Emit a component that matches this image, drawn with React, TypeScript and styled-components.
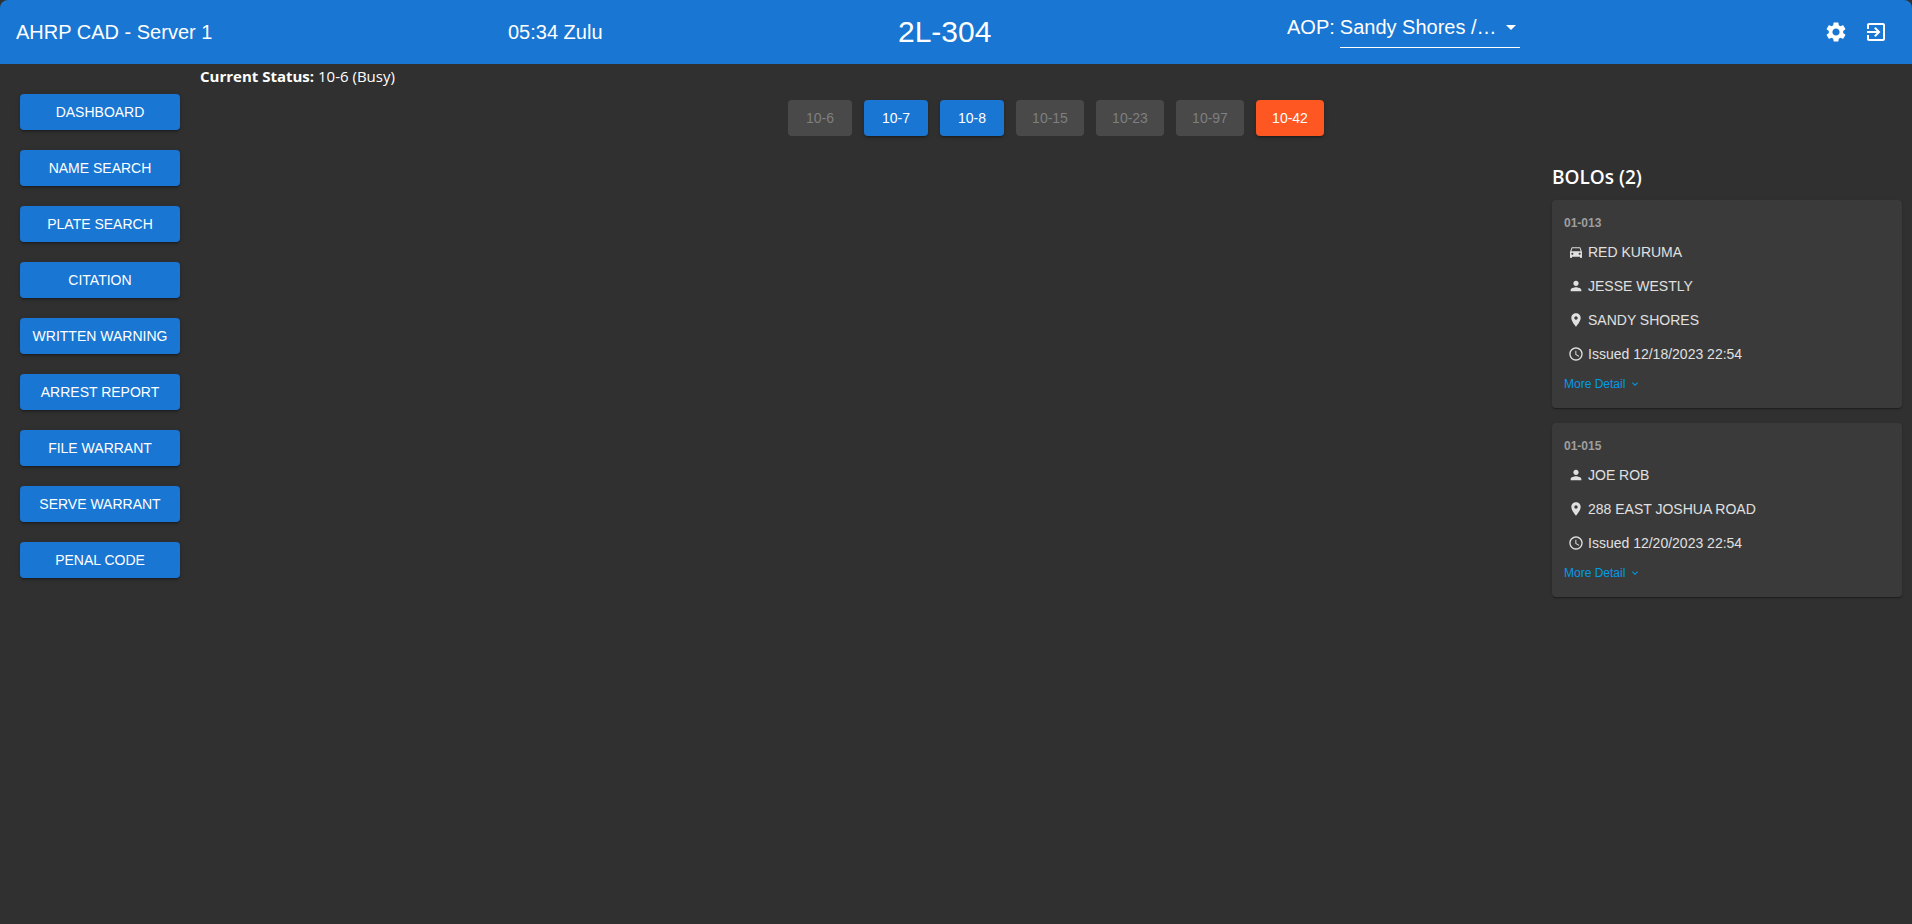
import React from "react";
import styled, { createGlobalStyle } from "styled-components";

const Global = createGlobalStyle`
  html, body { margin: 0; padding: 0; background: #303030; height: 100%; }
  #root { min-height: 100vh; }
  * { box-sizing: border-box; }
`;

const Page = styled.div`
  width: 100%;
  height: 924px;
  overflow: hidden;
  background: #303030;
  color: #fff;
  font-family: "Liberation Sans", Arial, sans-serif;
`;

const AppBar = styled.header`
  height: 64px;
  background: #1976d2;
  border-radius: 8px 8px 0 0;
  display: grid;
  grid-template-columns: 492px 390px 389px 1fr auto;
  align-items: center;
  padding-left: 16px;
  padding-right: 16px;
  font-size: 20px;
`;

const BarText = styled.div`
  font-size: 20px;
  white-space: nowrap;
`;

const Callsign = styled.div`
  font-size: 30px;
  white-space: nowrap;
`;

const AopGroup = styled.div`
  display: flex;
  align-items: flex-start;
  gap: 5px;
  height: 32px;
`;

const AopSelect = styled.div`
  width: 180px;
  height: 32px;
  border-bottom: 1px solid #fff;
  display: flex;
  align-items: flex-start;
  justify-content: space-between;
  font-size: 20px;
`;

const CaretBox = styled.span`
  display: block;
  width: 0;
  height: 0;
  margin: 9px 4px 0 0;
  border-left: 5px solid transparent;
  border-right: 5px solid transparent;
  border-top: 5px solid #fff;
`;

const BarIcons = styled.div`
  display: flex;
  gap: 16px;
  align-items: center;
  margin-right: 8px;
`;

const Body = styled.div`
  display: grid;
  grid-template-columns: 200px 1fr;
`;

const Sidebar = styled.nav`
  display: flex;
  flex-direction: column;
  gap: 20px;
  padding: 30px 0 0 20px;
`;

const Raised = styled.button<{ $bg: string; $fg: string; $flat?: boolean }>`
  height: 36px;
  border: 0;
  border-radius: 4px;
  background: ${(p) => p.$bg};
  color: ${(p) => p.$fg};
  font-family: "Liberation Sans", Arial, sans-serif;
  font-size: 14px;
  padding: 0;
  box-shadow: ${(p) =>
    p.$flat
      ? "none"
      : "0 3px 1px -2px rgba(0,0,0,.2), 0 2px 2px 0 rgba(0,0,0,.14), 0 1px 5px 0 rgba(0,0,0,.12)"};
`;

const NavButton = styled(Raised)`
  width: 160px;
`;

const StatusButton = styled(Raised)<{ $w: number }>`
  width: ${(p) => p.$w}px;
`;

const Main = styled.main`
  display: flex;
  flex-direction: column;
`;

const CurrentStatus = styled.div`
  height: 24px;
  font-family: "Open Sans", sans-serif;
  font-size: 15px;
  line-height: 24px;
  b { font-weight: 700; }
`;

const StatusRow = styled.div`
  display: flex;
  justify-content: center;
  gap: 12px;
  margin-top: 12px;
`;

const RightColumn = styled.aside`
  align-self: flex-end;
  width: 350px;
  margin-right: 10px;
  margin-top: 29px;
  display: flex;
  flex-direction: column;
`;

const Heading = styled.h2`
  margin: 0 0 11px;
  height: 24px;
  font-family: "Open Sans", sans-serif;
  font-size: 19px;
  font-weight: 600;
  line-height: 24px;
`;

const Card = styled.section`
  background: #3a3a3a;
  border-radius: 4px;
  padding: 16px 12px 17px;
  margin-bottom: 15px;
  box-shadow: 0 2px 1px -1px rgba(0,0,0,.2), 0 1px 1px 0 rgba(0,0,0,.14), 0 1px 3px 0 rgba(0,0,0,.12);
`;

const CardId = styled.div`
  font-size: 12px;
  font-weight: 700;
  line-height: 15px;
  color: #9e9e9e;
  margin-bottom: 4px;
`;

const Row = styled.div`
  height: 34px;
  display: flex;
  align-items: center;
  padding-left: 4px;
  gap: 4px;
  font-size: 14px;
  color: #e0e0e0;
`;

const RowIcon = styled.svg`
  width: 16px;
  height: 16px;
  fill: #e0e0e0;
  flex: none;
`;

const More = styled.div`
  display: flex;
  align-items: center;
  gap: 4px;
  height: 14px;
  margin-top: 6px;
  font-size: 12px;
  color: #039be5;
`;

const icons: Record<string, string> = {
  car: "M18.92 6.01C18.72 5.42 18.16 5 17.5 5h-11c-.66 0-1.21.42-1.42 1.01L3 12v8c0 .55.45 1 1 1h1c.55 0 1-.45 1-1v-1h12v1c0 .55.45 1 1 1h1c.55 0 1-.45 1-1v-8l-2.08-5.99zM6.5 16c-.83 0-1.5-.67-1.5-1.5S5.67 13 6.5 13s1.5.67 1.5 1.5S7.33 16 6.5 16zm11 0c-.83 0-1.5-.67-1.5-1.5s.67-1.5 1.5-1.5 1.5.67 1.5 1.5-.67 1.5-1.5 1.5zM5 11l1.5-4.5h11L19 11H5z",
  person: "M12 12c2.21 0 4-1.79 4-4s-1.79-4-4-4-4 1.79-4 4 1.79 4 4 4zm0 2c-2.67 0-8 1.34-8 4v2h16v-2c0-2.66-5.33-4-8-4z",
  place: "M12 2C8.13 2 5 5.13 5 9c0 5.25 7 13 7 13s7-7.75 7-13c0-3.87-3.13-7-7-7zm0 9.5c-1.38 0-2.5-1.12-2.5-2.5s1.12-2.5 2.5-2.5 2.5 1.12 2.5 2.5-1.12 2.5-2.5 2.5z",
  clock: "M11.99 2C6.47 2 2 6.48 2 12s4.47 10 9.99 10C17.52 22 22 17.52 22 12S17.52 2 11.99 2zM12 20c-4.42 0-8-3.58-8-8s3.58-8 8-8 8 3.58 8 8-3.58 8-8 8zm.5-13H11v6l5.25 3.15.75-1.23-4.5-2.67z",
};

const navItems = ["DASHBOARD", "NAME SEARCH", "PLATE SEARCH", "CITATION", "WRITTEN WARNING", "ARREST REPORT", "FILE WARRANT", "SERVE WARRANT", "PENAL CODE"];

const statuses = [
  { label: "10-6", w: 64, bg: "#494949", fg: "#7f7f7f", flat: true },
  { label: "10-7", w: 64, bg: "#1976d2", fg: "#fff" },
  { label: "10-8", w: 64, bg: "#1976d2", fg: "#fff" },
  { label: "10-15", w: 68, bg: "#494949", fg: "#7f7f7f", flat: true },
  { label: "10-23", w: 68, bg: "#494949", fg: "#7f7f7f", flat: true },
  { label: "10-97", w: 68, bg: "#494949", fg: "#7f7f7f", flat: true },
  { label: "10-42", w: 68, bg: "#ff5722", fg: "#fff" },
];

const bolos = [
  {
    id: "01-013",
    rows: [
      ["car", "RED KURUMA"],
      ["person", "JESSE WESTLY"],
      ["place", "SANDY SHORES"],
      ["clock", "Issued 12/18/2023 22:54"],
    ],
  },
  {
    id: "01-015",
    rows: [
      ["person", "JOE ROB"],
      ["place", "288 EAST JOSHUA ROAD"],
      ["clock", "Issued 12/20/2023 22:54"],
    ],
  },
];

export default function App() {
  return (
    <Page>
      <Global />
      <AppBar>
        <BarText>AHRP CAD - Server 1</BarText>
        <BarText>05:34 Zulu</BarText>
        <Callsign>2L-304</Callsign>
        <AopGroup>
          <BarText>AOP:</BarText>
          <AopSelect>
            <span>Sandy Shores /…</span>
            <CaretBox />
          </AopSelect>
        </AopGroup>
        <BarIcons>
          <svg width="24" height="24" viewBox="0 0 24 24" fill="#fff">
            <path d="M19.14 12.94c.04-.3.06-.61.06-.94 0-.32-.02-.64-.07-.94l2.03-1.58c.18-.14.23-.41.12-.61l-1.92-3.32c-.12-.22-.37-.29-.59-.22l-2.39.96c-.5-.38-1.03-.7-1.62-.94l-.36-2.54c-.04-.24-.24-.41-.48-.41h-3.84c-.24 0-.43.17-.47.41l-.36 2.54c-.59.24-1.13.57-1.62.94l-2.39-.96c-.22-.08-.47 0-.59.22L2.74 8.87c-.12.21-.08.47.12.61l2.03 1.58c-.05.3-.09.63-.09.94s.02.64.07.94l-2.03 1.58c-.18.14-.23.41-.12.61l1.92 3.32c.12.22.37.29.59.22l2.39-.96c.5.38 1.03.7 1.62.94l.36 2.54c.05.24.24.41.48.41h3.84c.24 0 .44-.17.47-.41l.36-2.54c.59-.24 1.13-.56 1.62-.94l2.39.96c.22.08.47 0 .59-.22l1.92-3.32c.12-.22.07-.47-.12-.61l-2.01-1.58zM12 15.6c-1.98 0-3.6-1.62-3.6-3.6s1.62-3.6 3.6-3.6 3.6 1.62 3.6 3.6-1.62 3.6-3.6 3.6z" />
          </svg>
          <svg width="24" height="24" viewBox="0 0 24 24" fill="#fff">
            <path d="M10.09 15.59 11.5 17l5-5-5-5-1.41 1.41L12.67 11H3v2h9.67l-2.58 2.59zM19 3H5c-1.11 0-2 .9-2 2v4h2V5h14v14H5v-4H3v4c0 1.1.89 2 2 2h14c1.1 0 2-.9 2-2V5c0-1.1-.9-2-2-2z" />
          </svg>
        </BarIcons>
      </AppBar>
      <Body>
        <Sidebar>
          {navItems.map((n) => (
            <NavButton key={n} $bg="#1976d2" $fg="#fff">{n}</NavButton>
          ))}
        </Sidebar>
        <Main>
          <CurrentStatus><b>Current Status:</b> 10-6 (Busy)</CurrentStatus>
          <StatusRow>
            {statuses.map((s) => (
              <StatusButton key={s.label} $w={s.w} $bg={s.bg} $fg={s.fg} $flat={s.flat}>{s.label}</StatusButton>
            ))}
          </StatusRow>
          <RightColumn>
            <Heading>BOLOs (2)</Heading>
            {bolos.map((b) => (
              <Card key={b.id}>
                <CardId>{b.id}</CardId>
                {b.rows.map(([icon, text]) => (
                  <Row key={text}>
                    <RowIcon viewBox="0 0 24 24"><path d={icons[icon]} /></RowIcon>
                    <span>{text}</span>
                  </Row>
                ))}
                <More>
                  More Detail
                  <svg width="12" height="12" viewBox="0 0 24 24" fill="#039be5">
                    <path d="M16.59 8.59 12 13.17 7.41 8.59 6 10l6 6 6-6z" />
                  </svg>
                </More>
              </Card>
            ))}
          </RightColumn>
        </Main>
      </Body>
    </Page>
  );
}
